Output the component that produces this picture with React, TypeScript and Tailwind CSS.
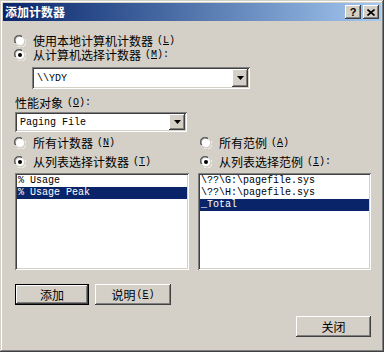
import React from 'react';

const raised =
  'bg-[#d4d0c8] shadow-[inset_-1px_-1px_#404040,inset_1px_1px_#ffffff,inset_-2px_-2px_#808080,inset_2px_2px_#d4d0c8]';
const sunken =
  'bg-white shadow-[inset_1px_1px_#808080,inset_-1px_-1px_#ffffff,inset_2px_2px_#404040,inset_-2px_-2px_#d4d0c8]';

const cjk = "font-['Noto_Sans_CJK_SC',sans-serif]";
const mono = "font-['Liberation_Mono','Noto_Sans_CJK_SC',monospace]";

const Key = ({ k, colon }: { k: string; colon?: boolean }) => (
  <span className={`${mono} text-[10px] leading-[12px] ml-[4px]`}>
    (<span className="underline">{k}</span>){colon ? ':' : ''}
  </span>
);

const Radio = ({ checked, label, k, colon }: { checked?: boolean; label: string; k: string; colon?: boolean }) => (
  <div className="flex items-center h-[14px]">
    <svg width="12" height="12" viewBox="0 0 12 12" className="ml-[-1px] mr-[7px] shrink-0">
      <path d="M1 8 A5 5 0 0 1 8 1" fill="none" stroke="#808080" strokeWidth="1" />
      <path d="M2 8 A4 4 0 0 1 8 2" fill="none" stroke="#404040" strokeWidth="1" />
      <circle cx="6" cy="6" r="4" fill="#ffffff" />
      <path d="M11 4 A5 5 0 0 1 4 11" fill="none" stroke="#ffffff" strokeWidth="1" />
      <path d="M10 4 A4 4 0 0 1 4 10" fill="none" stroke="#d4d0c8" strokeWidth="1" />
      {checked && <circle cx="6" cy="6" r="2" fill="#000000" />}
    </svg>
    <span className={`${cjk} text-[12px] leading-[12px]`}>{label}</span>
    <Key k={k} colon={colon} />
  </div>
);

const Combo = ({ value, w, h }: { value: string; w: string; h: string }) => (
  <div className={`${sunken} ${w} ${h} flex items-center p-[2px]`}>
    <span className={`${mono} text-[10px] flex-1 pl-[3px] pt-[1px]`}>{value}</span>
    <div className={`${raised} w-[16px] h-full flex items-center justify-center`}>
      <svg width="7" height="4" viewBox="0 0 7 4">
        <path d="M0 0 H7 L3.5 4 Z" fill="#000" />
      </svg>
    </div>
  </div>
);

const ListBox = ({ items, sel, w }: { items: string[]; sel: number; w: string }) => (
  <div className={`${sunken} ${w} h-[97px] p-[2px]`}>
    {items.map((it, i) => (
      <div
        key={it}
        className={`${mono} text-[10px] h-[12px] leading-[12px] pl-[1px] whitespace-pre ${
          i === sel ? 'bg-[#0a246a] text-white' : 'text-black'
        }`}
      >
        {it}
      </div>
    ))}
  </div>
);

const Button = ({ children, def, w, className = '' }: { children: React.ReactNode; def?: boolean; w: string; className?: string }) => (
  <div className={`${def ? 'border border-black' : ''} ${className}`}>
    <div className={`${raised} ${w} ${def ? 'h-[19px]' : 'h-[21px]'} flex items-center justify-center ${cjk} text-[12px]`}>
      {children}
    </div>
  </div>
);

export default function App() {
  return (
    <div className="w-[384px] h-[352px] bg-[#d4d0c8] p-[3px] flex flex-col text-black shadow-[inset_-1px_-1px_#404040,inset_1px_1px_#d4d0c8,inset_-2px_-2px_#808080,inset_2px_2px_#ffffff]">
      <div className="h-[18px] bg-gradient-to-r from-[#0a246a] to-[#a6caf0] flex items-center pl-[2px] pr-[2px]">
        <span className={`${cjk} text-[12px] font-bold text-white flex-1`}>添加计数器</span>
        <div className={`${raised} w-[16px] h-[14px] flex items-center justify-center`}>
          <span className="font-['Liberation_Sans',sans-serif] text-[11px] font-bold leading-none">?</span>
        </div>
        <div className={`${raised} w-[16px] h-[14px] flex items-center justify-center ml-[2px]`}>
          <svg width="8" height="7" viewBox="0 0 8 7">
            <path d="M0.5 0.5 L7.5 6.5 M7.5 0.5 L0.5 6.5" stroke="#000" strokeWidth="1.6" />
          </svg>
        </div>
      </div>

      <div className="pl-[12px] flex flex-col">
        <div className="mt-[13px]">
          <Radio label="使用本地计算机计数器" k="L" />
        </div>
        <Radio checked label="从计算机选择计数器" k="M" colon />
        <div className="mt-[5px] ml-[17px]">
          <Combo value="\\YDY" w="w-[218px]" h="h-[22px]" />
        </div>
        <div className="mt-[7px] h-[14px] flex items-center">
          <span className={`${cjk} text-[12px] leading-[12px]`}>性能对象</span>
          <Key k="O" colon />
        </div>
        <div className="mt-[2px]">
          <Combo value="Paging File" w="w-[172px]" h="h-[20px]" />
        </div>

        <div className="mt-[4px] flex">
          <div className="w-[183px] flex flex-col">
            <Radio label="所有计数器" k="N" />
            <div className="mt-[5px]">
              <Radio checked label="从列表选择计数器" k="T" />
            </div>
            <div className="mt-[4px]">
              <ListBox items={['% Usage', '% Usage Peak']} sel={1} w="w-[174px]" />
            </div>
          </div>
          <div className="flex flex-col">
            <div className="ml-[3px]">
              <Radio label="所有范例" k="A" />
            </div>
            <div className="mt-[5px] ml-[3px]">
              <Radio checked label="从列表选择范例" k="I" colon />
            </div>
            <div className="mt-[4px]">
              <ListBox items={['\\??\\G:\\pagefile.sys', '\\??\\H:\\pagefile.sys', '_Total']} sel={2} w="w-[173px]" />
            </div>
          </div>
        </div>

        <div className="mt-[14px] flex gap-[6px]">
          <Button def w="w-[72px]">添加</Button>
          <Button w="w-[76px]">
            说明<span className={`${mono} text-[10px] ml-[1px]`}>(<span className="underline">E</span>)</span>
          </Button>
        </div>
        <div className="mt-[11px] flex justify-end pr-[10px]">
          <Button w="w-[75px]">关闭</Button>
        </div>
      </div>
    </div>
  );
}
